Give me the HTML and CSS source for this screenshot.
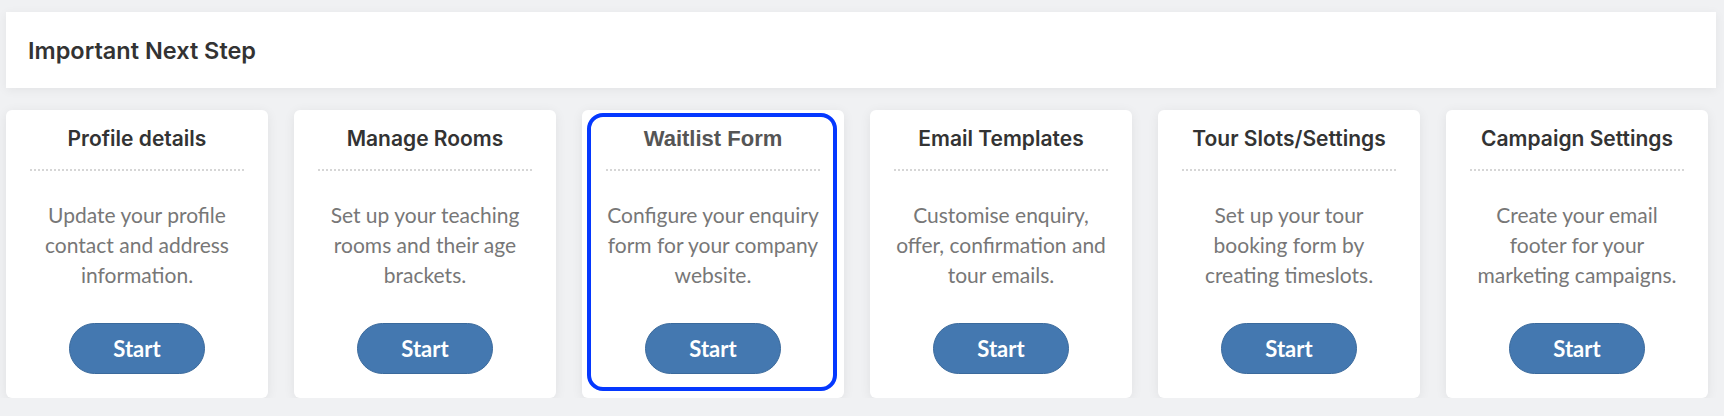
FILE: index.html
```html
<!DOCTYPE html>
<html lang="en">
<head>
  <meta charset="UTF-8" />
  <meta name="viewport" content="width=device-width, initial-scale=1" />
  <title>Important Next Step</title>
  <link rel="stylesheet" href="styles.css">
</head>
<body>
  <div class="next-step">
    <h2>Important Next Step</h2>
  </div>

  <div class="steps">
    <div class="step">
      <h3>Profile details</h3>
      <p>Update your profile contact and address information.</p>
      <button class="btn-start">Start</button>
    </div>
    <div class="step">
      <h3>Manage Rooms</h3>
      <p>Set up your teaching rooms and their age brackets.</p>
      <button class="btn-start">Start</button>
    </div>
    <div class="step step-active">
      <h3>Waitlist Form</h3>
      <p>Configure your enquiry form for your company website.</p>
      <button class="btn-start">Start</button>
    </div>
    <div class="step">
      <h3>Email Templates</h3>
      <p>Customise enquiry, offer, confirmation and tour emails.</p>
      <button class="btn-start">Start</button>
    </div>
    <div class="step">
      <h3>Tour Slots/Settings</h3>
      <p>Set up your tour booking form by creating timeslots.</p>
      <button class="btn-start">Start</button>
    </div>
    <div class="step">
      <h3>Campaign Settings</h3>
      <p>Create your email footer for your marketing campaigns.</p>
      <button class="btn-start">Start</button>
    </div>
  </div>
</body>
</html>
```

FILE: styles.css
```css
body {
  margin: 0;
  padding: 12px 8px 0 6px;
  background-color: #f0f1f3;
  font-family: Inter, "Noto Sans", sans-serif;
}

.next-step {
  background-color: #fff;
  height: 76px;
  display: flex;
  align-items: center;
  padding-left: 22px;
  box-shadow: 0 2px 10px rgba(0, 0, 0, 0.06);
}

.next-step h2 {
  margin: 0;
  font-size: 23.5px;
  font-weight: 600;
  color: #333;
}

.steps {
  display: grid;
  grid-template-columns: repeat(6, 262px);
  gap: 26px;
  margin-top: 22px;
}

.step {
  position: relative;
  background-color: #fff;
  border-radius: 6px;
  box-shadow: 0 2px 12px rgba(0, 0, 0, 0.07);
  padding: 16px 24px 24px;
  display: flex;
  flex-direction: column;
  align-items: center;
  text-align: center;
}

.step h3 {
  margin: 0;
  width: 100%;
  font-size: 21px;
  line-height: 26px;
  font-weight: 600;
  color: #333;
  padding-bottom: 17px;
  border-bottom: 2px dotted #d6d6d6;
}

.step p {
  width: 222px;
  margin: 29px 0 0;
  font-family: Lato, "Open Sans", sans-serif;
  font-size: 21px;
  line-height: 30px;
  color: #777;
}

.btn-start {
  margin-top: 33px;
  width: 136px;
  height: 51px;
  border-radius: 26px;
  background-color: #4478b0;
  border: 1px solid #3b6a9c;
  color: #fff;
  font-family: Lato, "Open Sans", sans-serif;
  font-weight: bold;
  font-size: 22px;
  cursor: pointer;
}

/* selected step */
.step-active h3 {
  font-family: "Liberation Sans", Arial, sans-serif;
  font-weight: bold;
  font-size: 22px;
  color: #555;
}

.step-active::after {
  content: "";
  position: absolute;
  inset: 3px 7px 7px 5px;
  border: 4px solid #0538ff;
  border-radius: 16px;
  pointer-events: none;
}
```
